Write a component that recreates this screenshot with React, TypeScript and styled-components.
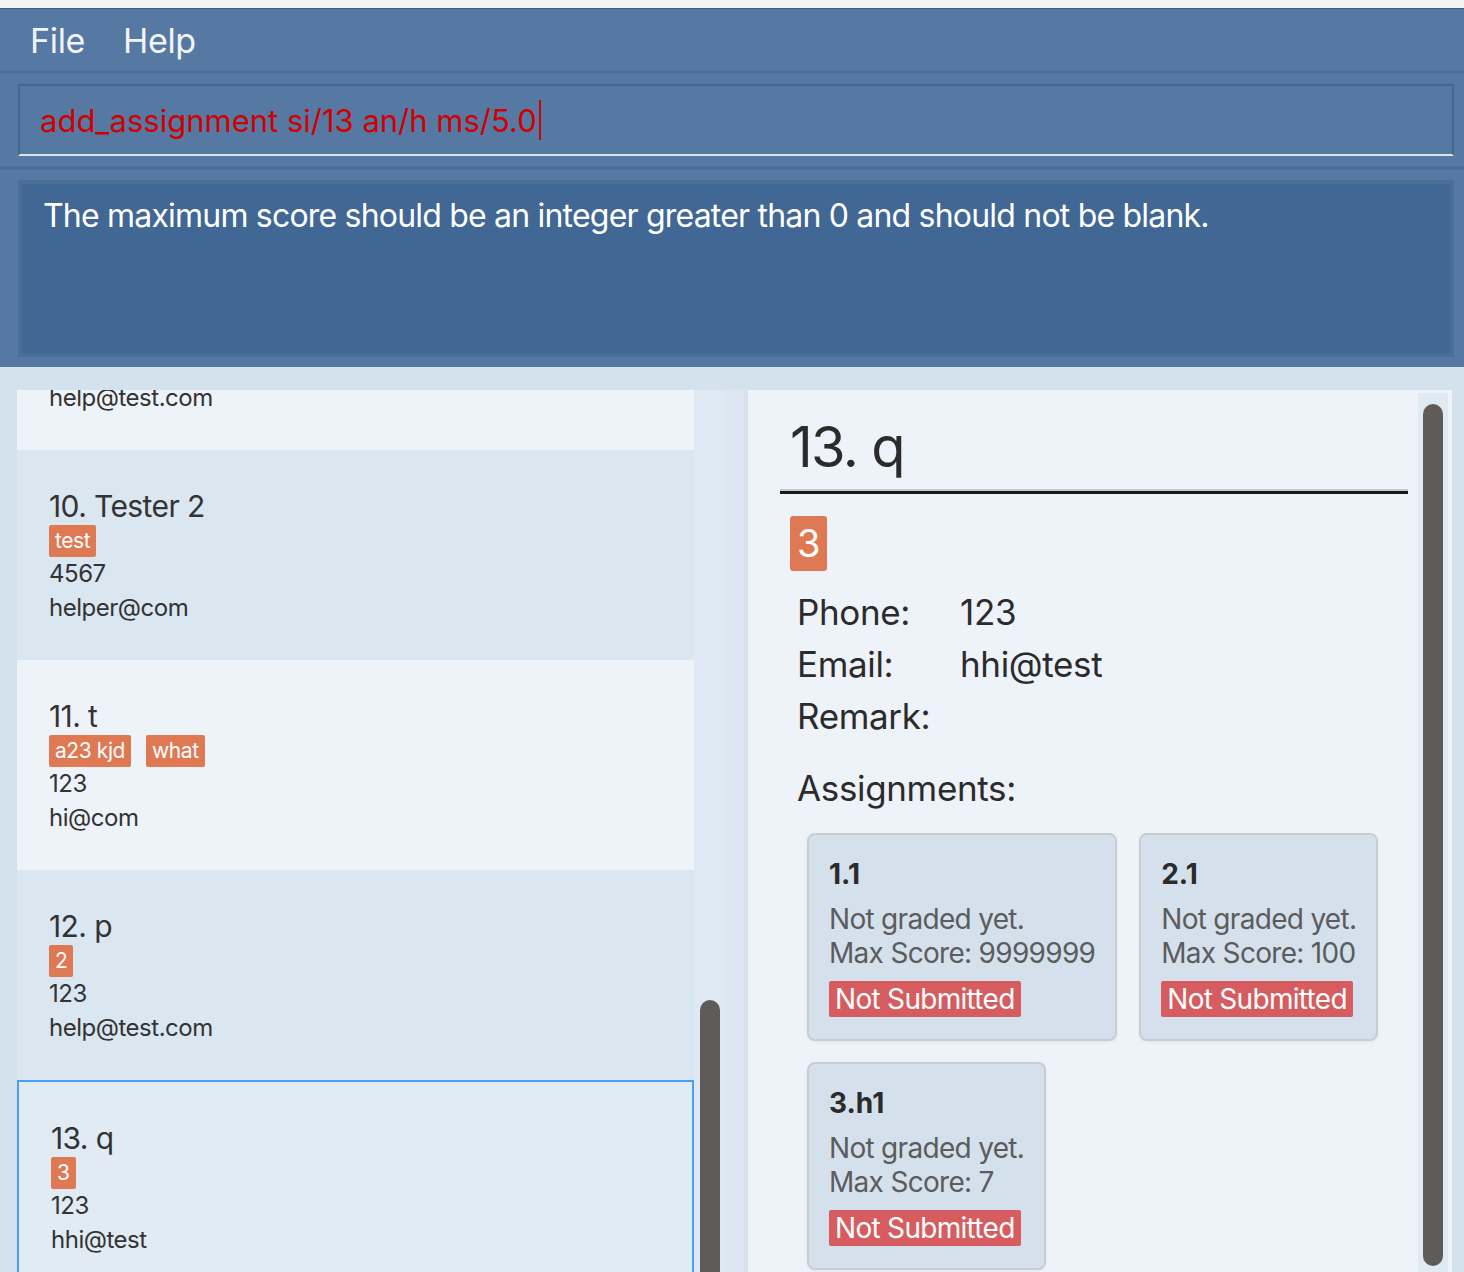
import React, { useLayoutEffect, useRef } from "react";
import styled, { createGlobalStyle } from "styled-components";

const GlobalStyle = createGlobalStyle`
  html, body, #root {
    margin: 0;
    padding: 0;
    height: 100%;
  }
  body {
    font-family: Inter, "Noto Sans", "Liberation Sans", sans-serif;
    background: #f3f3f3;
    overflow: hidden;
  }
  * {
    box-sizing: border-box;
  }
`;

interface Person {
  idx: number;
  name: string;
  tags: string[];
  phone: string;
  email: string;
  selected?: boolean;
}

interface Assignment {
  title: string;
  maxScore: string;
}

const people: Person[] = [
  { idx: 9, name: "Helper", tags: ["friend"], phone: "123", email: "help@test.com" },
  { idx: 10, name: "Tester 2", tags: ["test"], phone: "4567", email: "helper@com" },
  { idx: 11, name: "t", tags: ["a23 kjd", "what"], phone: "123", email: "hi@com" },
  { idx: 12, name: "p", tags: ["2"], phone: "123", email: "help@test.com" },
  { idx: 13, name: "q", tags: ["3"], phone: "123", email: "hhi@test", selected: true },
];

const assignments: Assignment[] = [
  { title: "1.1", maxScore: "9999999" },
  { title: "2.1", maxScore: "100" },
  { title: "3.h1", maxScore: "7" },
];

const Window = styled.div`
  height: 100vh;
  display: flex;
  flex-direction: column;
`;

const TitleStrip = styled.div`
  height: 9px;
  flex: none;
  background: #f3f3f3;
  border-bottom: 1px solid #3b5a85;
`;

const MenuBar = styled.div`
  height: 64px;
  flex: none;
  display: flex;
  align-items: center;
  padding-left: 11px;
  background: #5579a3;
  border-bottom: 2px solid #4b6d98;
`;

const MenuItem = styled.span`
  padding: 0 19px;
  font-size: 34px;
  letter-spacing: -0.01em;
  color: #f2f4f7;
`;

const CommandSection = styled.div`
  flex: none;
  padding: 11px 10px 10px 18px;
  background: #5579a3;
  border-bottom: 4px solid #4d6f9a;
`;

const CommandBox = styled.div`
  height: 72px;
  display: flex;
  align-items: center;
  padding-left: 20px;
  border: 2px solid #47668f;
  border-bottom-color: #dce5ef;
  font-size: 31px;
  color: #d10000;
`;

const Caret = styled.span`
  display: inline-block;
  width: 2px;
  height: 40px;
  margin-left: 2px;
  background: #d10000;
`;

const ResultSection = styled.div`
  flex: none;
  height: 197px;
  padding: 10px 10px 10px 18px;
  background: #5579a3;
`;

const ResultBox = styled.div`
  height: 100%;
  padding: 12px 21px;
  background: #416794;
  border: 4px solid #4b6e99;
  font-size: 32px;
  letter-spacing: -0.025em;
  color: #ffffff;
`;

const Main = styled.div`
  flex: 1;
  min-height: 0;
  display: flex;
  padding: 23px 12px 0 17px;
  background: #d4e2ed;
`;

const ListPane = styled.div`
  display: flex;
  width: 708px;
  flex: none;
`;

const ListCells = styled.div`
  flex: 1;
  overflow: hidden;
`;

const Cell = styled.div<{ $light: boolean; $selected?: boolean }>`
  padding: 38px 32px 35px;
  background: ${(p) => (p.$selected ? "#e0ebf4" : p.$light ? "#eef3fa" : "#dae6f0")};
  border: ${(p) => (p.$selected ? "2px solid #4a9ff5" : "none")};
  color: #333333;
`;

const CellName = styled.div`
  font-size: 30px;
  line-height: 36px;
  letter-spacing: -0.02em;
`;

const TagRow = styled.div`
  display: flex;
  gap: 15px;
  margin-top: 1px;
`;

const Tag = styled.span<{ $big?: boolean }>`
  display: inline-block;
  padding: 0 ${(p) => (p.$big ? 7 : 6)}px;
  border-radius: ${(p) => (p.$big ? 3 : 2)}px;
  background: #df7953;
  color: #ffffff;
  font-size: ${(p) => (p.$big ? 38 : 21)}px;
  line-height: ${(p) => (p.$big ? 55 : 32)}px;
  letter-spacing: -0.02em;
`;

const CellLine = styled.div`
  font-size: 24px;
  line-height: 34px;
  letter-spacing: -0.02em;
`;

const Track = styled.div`
  width: 31px;
  flex: none;
  display: flex;
  flex-direction: column;
  align-items: center;
  background: #dfe9f3;
`;

const Thumb = styled.div`
  width: 20px;
  border-radius: 10px 10px 0 0;
  background: #5f5b58;
`;

const Divider = styled.div`
  width: 23px;
  flex: none;
  background: #dce7f1;
  border-right: 4px solid #d6e2ec;
`;

const DetailPane = styled.div`
  flex: 1;
  display: flex;
  min-width: 0;
  background: #eef3fa;
`;

const DetailBody = styled.div`
  flex: 1;
  padding: 21px 10px 0 32px;
  color: #2b2b2b;
  overflow: hidden;
`;

const DetailHeader = styled.div`
  padding: 0 10px 8px;
  font-size: 56px;
  line-height: 72px;
  letter-spacing: -0.03em;
  border-bottom: 3px solid #1a1a1a;
  box-shadow: inset 0 -2px 0 #c8c8c8;
`;

const DetailTags = styled.div`
  display: flex;
  gap: 15px;
  padding: 22px 10px 15px;
`;

const InfoGrid = styled.div`
  display: grid;
  grid-template-columns: 163px 1fr;
  padding-left: 17px;
  font-size: 35px;
  line-height: 52px;
  letter-spacing: -0.01em;
`;

const SectionTitle = styled.div`
  padding: 20px 0 19px 17px;
  font-size: 35px;
  line-height: 52px;
  letter-spacing: -0.01em;
`;

const CardWrap = styled.div`
  display: flex;
  flex-wrap: wrap;
  gap: 21px 22px;
  padding-left: 27px;
  padding-right: 20px;
`;

const Card = styled.div`
  padding: 21px 20px 22px;
  background: #d4e1ed;
  border: 2px solid #c9cdd1;
  border-radius: 8px;
  box-shadow: 0 1px 3px rgba(0, 0, 0, 0.06);
`;

const CardTitle = styled.div`
  font-size: 28px;
  font-weight: 700;
  line-height: 36px;
  color: #2b2b2b;
  margin-bottom: 10px;
`;

const CardLine = styled.div`
  font-size: 28px;
  line-height: 34px;
  letter-spacing: -0.025em;
  color: #5c5c5c;
  white-space: nowrap;
`;

const StatusBadge = styled.span`
  display: inline-block;
  margin-top: 11px;
  padding: 0 6px;
  border-radius: 2px;
  background: #d65c5f;
  color: #ffffff;
  font-size: 28px;
  line-height: 36px;
  letter-spacing: -0.025em;
  white-space: nowrap;
`;

const DetailTrack = styled.div`
  width: 30px;
  flex: none;
  margin: 3px 4px 0 0;
  display: flex;
  justify-content: center;
  padding: 11px 0 6px;
  background: #e0eaf3;
`;

const DetailThumb = styled.div`
  width: 20px;
  border-radius: 10px;
  background: #5f5b58;
`;

const PersonCell: React.FC<{ person: Person }> = ({ person }) => (
  <Cell $light={person.idx % 2 === 1} $selected={person.selected}>
    <CellName>
      {person.idx}. {person.name}
    </CellName>
    <TagRow>
      {person.tags.map((t) => (
        <Tag key={t}>{t}</Tag>
      ))}
    </TagRow>
    <CellLine>{person.phone}</CellLine>
    <CellLine>{person.email}</CellLine>
  </Cell>
);

const AssignmentCard: React.FC<{ item: Assignment }> = ({ item }) => (
  <Card>
    <CardTitle>{item.title}</CardTitle>
    <CardLine>Not graded yet.</CardLine>
    <CardLine>Max Score: {item.maxScore}</CardLine>
    <StatusBadge>Not Submitted</StatusBadge>
  </Card>
);

export default function App() {
  const listRef = useRef<HTMLDivElement>(null);
  const current = people[people.length - 1];

  // the list is scrolled so that the selected person sits at the bottom
  useLayoutEffect(() => {
    if (listRef.current) listRef.current.scrollTop = 150;
  }, []);

  return (
    <Window>
      <GlobalStyle />
      <TitleStrip />
      <MenuBar>
        <MenuItem>File</MenuItem>
        <MenuItem>Help</MenuItem>
      </MenuBar>
      <CommandSection>
        <CommandBox>
          add_assignment si/13 an/h ms/5.0
          <Caret />
        </CommandBox>
      </CommandSection>
      <ResultSection>
        <ResultBox>
          The maximum score should be an integer greater than 0 and should not be blank.
        </ResultBox>
      </ResultSection>
      <Main>
        <ListPane>
          <ListCells ref={listRef}>
            {people.map((p) => (
              <PersonCell key={p.idx} person={p} />
            ))}
          </ListCells>
          <Track>
            <div style={{ flex: 1 }} />
            <Thumb style={{ height: 272 }} />
          </Track>
        </ListPane>
        <Divider />
        <DetailPane>
          <DetailBody>
            <DetailHeader>
              {current.idx}. {current.name}
            </DetailHeader>
            <DetailTags>
              {current.tags.map((t) => (
                <Tag key={t} $big>
                  {t}
                </Tag>
              ))}
            </DetailTags>
            <InfoGrid>
              <span>Phone:</span>
              <span>{current.phone}</span>
              <span>Email:</span>
              <span>{current.email}</span>
              <span>Remark:</span>
              <span />
            </InfoGrid>
            <SectionTitle>Assignments:</SectionTitle>
            <CardWrap>
              {assignments.map((a) => (
                <AssignmentCard key={a.title} item={a} />
              ))}
            </CardWrap>
          </DetailBody>
          <DetailTrack>
            <DetailThumb />
          </DetailTrack>
        </DetailPane>
      </Main>
    </Window>
  );
}
